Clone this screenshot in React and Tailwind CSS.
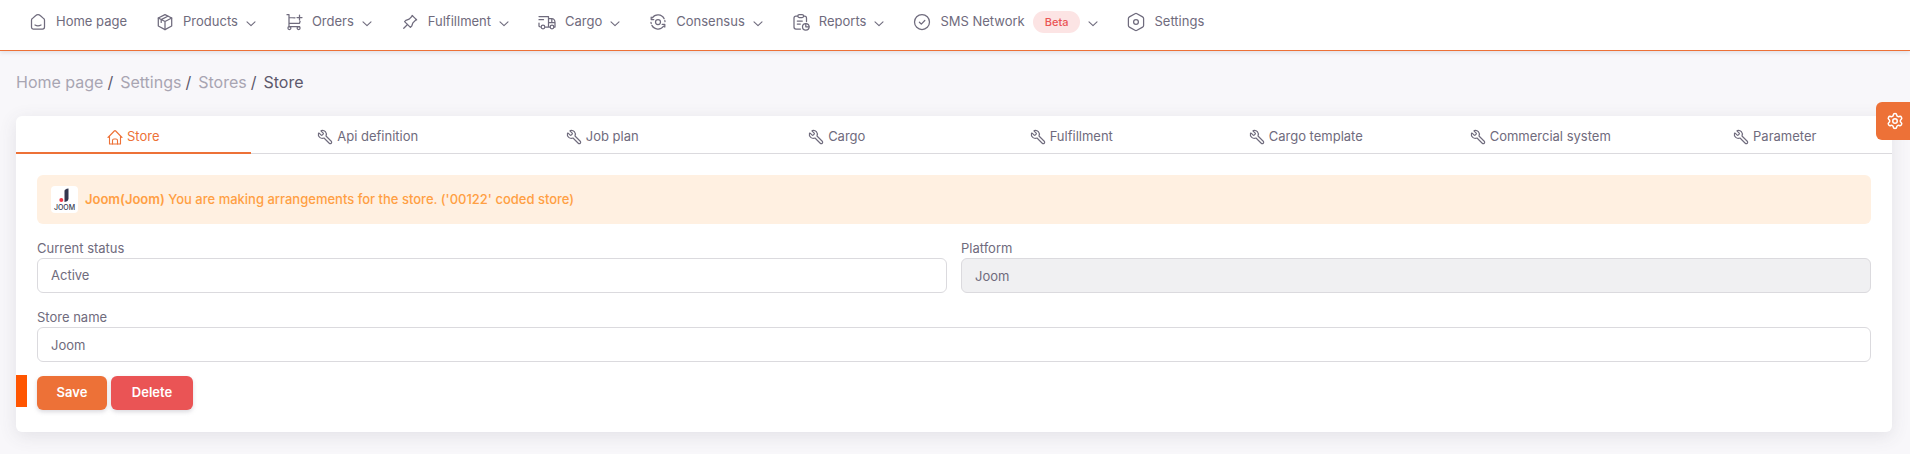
import { Settings, Wrench } from "lucide-react";
import { TbPin } from "react-icons/tb";

function Icon({ children, className = "size-5" }) {
  return (
    <svg
      viewBox="0 0 20 20"
      className={`${className} shrink-0`}
      fill="none"
      stroke="currentColor"
      strokeWidth="1.25"
      strokeLinecap="round"
      strokeLinejoin="round"
      aria-hidden="true"
    >
      {children}
    </svg>
  );
}

const HomeIcon = () => (
  <Icon>
    <path d="M3.500 8.200a2 2 0 0 1 .8-1.600l3.200-2.800a3.600 3.600 0 0 1 5 0l3.200 2.800a2 2 0 0 1 .8 1.600V15a2 2 0 0 1-2 2H5.200a1.700 1.700 0 0 1-1.700-1.700z" />
    <path d="M7 13c1.800 1 4.200 1 6 0" />
  </Icon>
);
const BoxIcon = () => (
  <Icon>
    <path d="M10 2.600 16.700 6v8L10 17.600 3.300 14V6z" />
    <path d="M3.300 6 10 9.500 16.700 6M10 9.500v8.100M12.800 4.200 6.200 7.600v2.800" />
  </Icon>
);
const CartIcon = () => (
  <Icon>
    <path d="M3 2.700h2v12M5 5.500l6 .3M5 11.300h10.500l.6-2M15.500 3v5M13 5.500h5M5 14.700h10.500" />
    <circle cx="5.400" cy="16" r="1.500" />
    <circle cx="14.600" cy="16" r="1.500" />
  </Icon>
);
const TruckIcon = () => (
  <Icon>
    <path d="M2 4.500h9.500V15H8.500M2 7.700h4.500M2 11v3.200l1.300.8M11.500 6.500h3.300c1.700 0 3.200 2 3.200 4V15h-1M11.500 15h1.700M11.500 10.500H18M14.800 6.500v4" />
    <circle cx="6" cy="15" r="1.800" />
    <circle cx="15" cy="15" r="1.800" />
  </Icon>
);
const SyncIcon = () => (
  <Icon>
    <circle cx="10" cy="10" r="2.500" />
    <path d="M4.300 5.800a7 7 0 0 1 11.800.8M15.700 14.200a7 7 0 0 1-11.800-.8M3.200 5v2.600h2.600M16.800 15v-2.600h-2.600M3 10.300l.2 1.200M17 9.700l-.2-1.200" />
  </Icon>
);
const ReportIcon = () => (
  <Icon>
    <path d="M6.800 4H5a2 2 0 0 0-2 2v9a2 2 0 0 0 2 2h4.500M12.800 4h.7a2 2 0 0 1 2 2v3.500" />
    <rect x="6.800" y="2.600" width="5.800" height="3" rx="1.500" />
    <path d="M6.300 9h5M6.300 12h3" />
    <circle cx="14.800" cy="14.800" r="3.300" />
    <path d="M14.800 11.500v3.300h3.300" />
  </Icon>
);
const CheckIcon = () => (
  <Icon>
    <circle cx="10" cy="10" r="7.500" />
    <path d="m7.400 10.200 1.900 1.900 3.500-3.600" />
  </Icon>
);
const HexIcon = () => (
  <Icon>
    <path d="M9 1.700a2 2 0 0 1 2 0l5.600 3.200a2 2 0 0 1 1 1.700v6.800a2 2 0 0 1-1 1.700l-5.600 3.200a2 2 0 0 1-2 0l-5.600-3.200a2 2 0 0 1-1-1.700V6.600a2 2 0 0 1 1-1.700z" />
    <circle cx="10" cy="10" r="2.400" />
  </Icon>
);
const PinIcon = () => <TbPin className="size-5 shrink-0 stroke-[1.5]" aria-hidden="true" />;

const HouseIcon = () => (
  <svg
    viewBox="0 0 16 16"
    className="size-4"
    fill="none"
    stroke="currentColor"
    strokeWidth="1.100"
    strokeLinecap="round"
    strokeLinejoin="round"
    aria-hidden="true"
  >
    <path d="M1 8.500 7.300 2a1 1 0 0 1 1.400 0L15 8.500M2.500 7.200V15h11V7.200" />
    <path d="M5.500 15v-3.500a1.500 1.500 0 0 1 1.500-1.500h2a1.500 1.500 0 0 1 1.500 1.500V15" />
  </svg>
);

const nav = [
  { label: "Home page", icon: HomeIcon },
  { label: "Products", icon: BoxIcon, menu: true },
  { label: "Orders", icon: CartIcon, menu: true },
  { label: "Fulfillment", icon: PinIcon, menu: true },
  { label: "Cargo", icon: TruckIcon, menu: true },
  { label: "Consensus", icon: SyncIcon, menu: true },
  { label: "Reports", icon: ReportIcon, menu: true },
  { label: "SMS Network", icon: CheckIcon, menu: true, badge: "Beta" },
  { label: "Settings", icon: HexIcon },
];

const tabs = [
  "Store",
  "Api definition",
  "Job plan",
  "Cargo",
  "Fulfillment",
  "Cargo template",
  "Commercial system",
  "Parameter",
];

function NavItem({ label, icon: Glyph, menu, badge }) {
  const body = (
    <>
      <Glyph />
      <span className="ml-2">{label}</span>
      {badge && (
        <span className="ml-2 rounded-full bg-[#fce4e4] px-3 text-[11px] font-medium leading-[22px] text-[#ea5455]">
          {badge}
        </span>
      )}
      {menu && (
        <svg
          viewBox="0 0 10 10"
          className="ml-2 mt-1 size-[10px]"
          fill="none"
          stroke="currentColor"
          strokeWidth="1.100"
          strokeLinecap="round"
          strokeLinejoin="round"
          aria-hidden="true"
        >
          <path d="m1 2.800 4 3.900 4-3.900" />
        </svg>
      )}
    </>
  );
  const style = "flex h-6 items-center whitespace-nowrap";
  return (
    <li>
      {menu ? (
        <button type="button" className={style}>
          {body}
        </button>
      ) : (
        <a href="#" className={style}>
          {body}
        </a>
      )}
    </li>
  );
}

function Field({ id, label, children }) {
  return (
    <div className="flex flex-col">
      <label htmlFor={id} className="leading-5">
        {label}
      </label>
      {children}
    </div>
  );
}

export default function App() {
  return (
    <div className="min-h-screen bg-[#f8f7fa] font-['Inter',sans-serif] text-[13px] text-[#6f6b7d]">
      <header className="border-b border-[#ed7137] bg-white shadow-[0_2px_4px_rgba(75,70,92,0.12)]">
        <nav aria-label="Main">
          <ul className="flex gap-7 px-7 pb-4 pt-[10px]">
            {nav.map((item) => (
              <NavItem key={item.label} {...item} />
            ))}
          </ul>
        </nav>
      </header>

      <main className="pl-4 pr-[18px]">
        <nav aria-label="Breadcrumb" className="pb-[22px] pt-[19px]">
          <ol className="flex gap-[7px] text-base leading-6 text-[#5d596c]">
            {["Home page", "Settings", "Stores"].map((crumb) => (
              <li key={crumb} className="flex gap-1">
                <a href="#" className="text-[#a8a5b2]">
                  {crumb}
                </a>
                <span>/</span>
              </li>
            ))}
            <li aria-current="page">Store</li>
          </ol>
        </nav>

        <section className="rounded-md bg-white shadow-[0_4px_18px_rgba(75,70,92,0.12)]">
          <div role="tablist" className="grid grid-cols-8">
            {tabs.map((tab, i) => (
              <button
                key={tab}
                type="button"
                role="tab"
                aria-selected={i === 0}
                className={`flex h-[38px] items-center justify-center gap-1 ${
                  i === 0
                    ? "border-b-2 border-[#ed7137] pt-[6px] text-[#ed7137]"
                    : "border-b border-[#dbdade] pt-[5px]"
                }`}
              >
                {i === 0 ? (
                  <HouseIcon />
                ) : (
                  <Wrench className="size-4 -scale-x-100 stroke-[1.75]" aria-hidden="true" />
                )}
                <span>{tab}</span>
              </button>
            ))}
          </div>

          <form className="px-[21px] pb-[22px] pt-[21px]" onSubmit={(e) => e.preventDefault()}>
            <div
              role="status"
              className="flex h-[49px] items-center gap-[7px] rounded-md bg-[#fff0e1] px-[14px] font-medium text-[#ff9f43]"
            >
              <svg viewBox="0 0 27 27" className="size-[27px] shrink-0" role="img" aria-label="Joom">
                <rect width="27" height="27" rx="4" fill="#fff" />
                <path d="M13.500 5q0-2 4-2.500v10q0 3-4 3.500z" fill="#34374f" />
                <circle cx="10.300" cy="14" r="2" fill="#ef3b4a" />
                <text
                  x="13.500"
                  y="24"
                  textAnchor="middle"
                  fill="#34374f"
                  className="font-['Inter',sans-serif] text-[7px] font-medium"
                >
                  JOOM
                </text>
              </svg>
              <p>
                <strong className="font-semibold">Joom(Joom)</strong> You are making arrangements for the
                store. (&#39;00122&#39; coded store)
              </p>
            </div>

            <div className="mt-[14px] grid grid-cols-2 gap-[14px]">
              <Field id="status" label="Current status">
                <select
                  id="status"
                  className="h-[35px] appearance-none rounded-md border border-[#dbdade] bg-white px-[13px]"
                >
                  <option>Active</option>
                </select>
              </Field>
              <Field id="platform" label="Platform">
                <input
                  id="platform"
                  disabled
                  defaultValue="Joom"
                  className="h-[35px] rounded-md border border-[#dbdade] bg-[#f0f0f2] px-[13px]"
                />
              </Field>
              <div className="col-span-2">
                <Field id="name" label="Store name">
                  <input
                    id="name"
                    defaultValue="Joom"
                    className="h-[35px] rounded-md border border-[#dbdade] bg-white px-[13px]"
                  />
                </Field>
              </div>
            </div>

            <div className="relative mt-[14px] flex gap-1 font-semibold text-white">
              <span className="absolute -left-[21px] -top-px h-8 w-[11px] bg-[#ff5500]" />
              <button
                type="submit"
                className="h-[34px] w-[70px] rounded-md bg-[#ed7137] shadow-[0_2px_4px_rgba(165,163,174,0.4)]"
              >
                Save
              </button>
              <button
                type="button"
                className="h-[34px] w-[82px] rounded-md bg-[#ea5455] shadow-[0_2px_4px_rgba(165,163,174,0.4)]"
              >
                Delete
              </button>
            </div>
          </form>
        </section>
      </main>

      <button
        type="button"
        aria-label="Customize"
        className="fixed right-0 top-[102px] flex h-[38px] w-[34px] items-center justify-center rounded-l-md bg-[#ed7137] pl-1 text-white"
      >
        <Settings className="size-[18px]" aria-hidden="true" />
      </button>
    </div>
  );
}
